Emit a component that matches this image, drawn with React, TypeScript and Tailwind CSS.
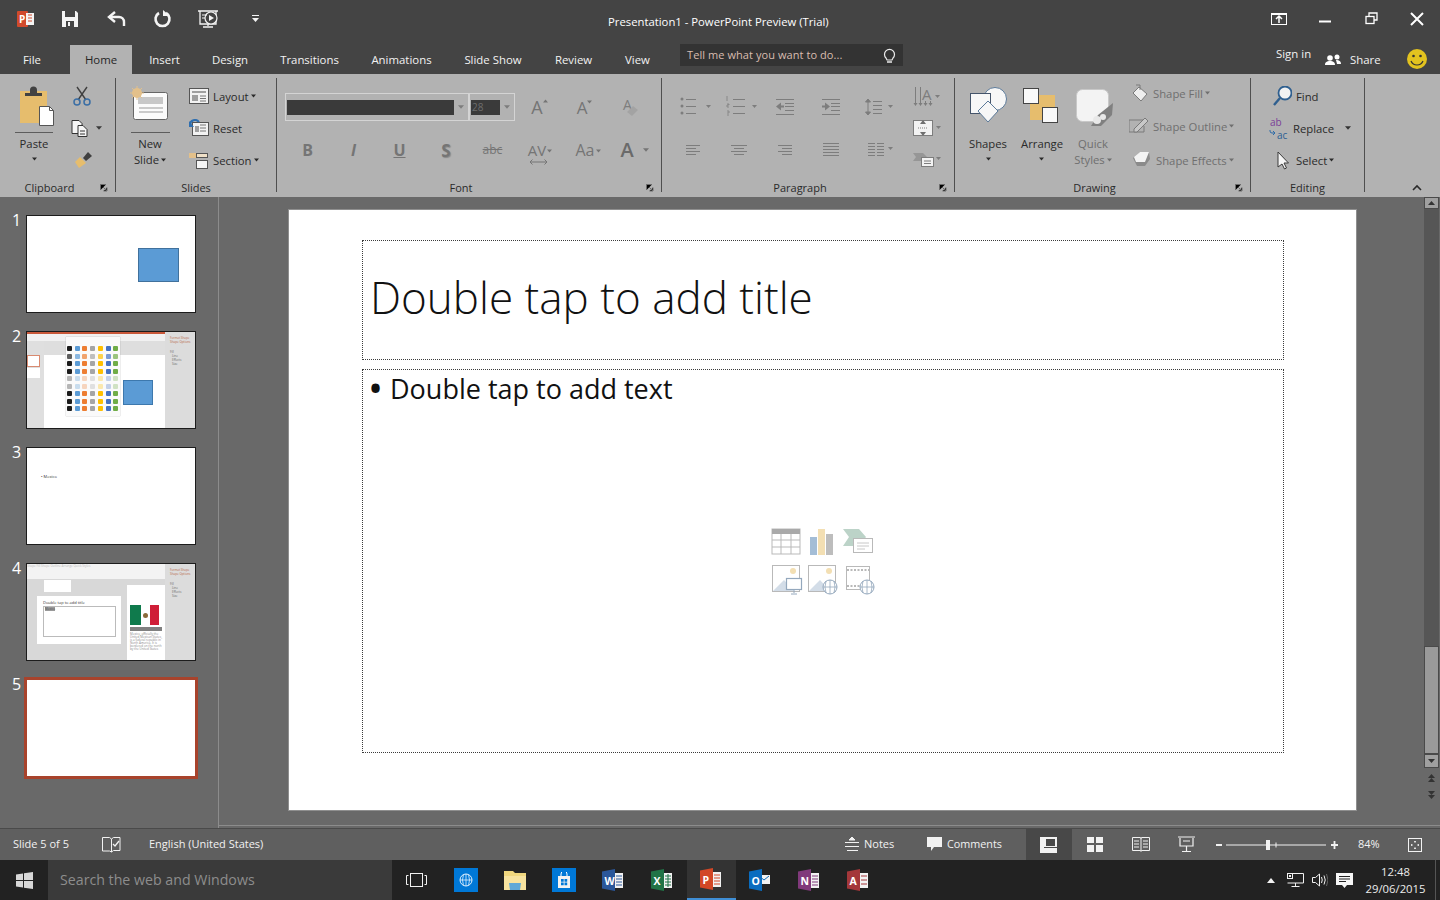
import React from 'react';

// svg whose viewBox is in page coordinates, so shapes can be read straight off the screenshot
function Ic({ x, y, w, h, children, className }: { x: number; y: number; w: number; h: number; children?: React.ReactNode; className?: string }) {
    return (
        <svg viewBox={`${x} ${y} ${w} ${h}`} width={w} height={h} className={`shrink-0 ${className ?? ''}`} fill="none">
            {children}
        </svg>
    );
}

function Caret({ className }: { className?: string }) {
    return (
        <svg width="7" height="4" viewBox="0 0 7 4" className={`inline-block shrink-0 ${className ?? ''}`}>
            <path d="M0 0h7L3.5 4z" fill="currentColor" />
        </svg>
    );
}

const tabs = [
    { label: 'Insert', cls: 'w-[65px]' },
    { label: 'Design', cls: 'w-[66px]' },
    { label: 'Transitions', cls: 'w-[93px]' },
    { label: 'Animations', cls: 'w-[91px]' },
    { label: 'Slide Show', cls: 'w-[92px]' },
    { label: 'Review', cls: 'w-[69px]' },
    { label: 'View', cls: 'w-[59px]' },
];

function TitleBar() {
    return (
        <div className="flex h-[44px] items-center bg-[#444444] text-white">
            <div className="flex items-center pb-[7px] pl-[17px]">
                <Ic x={17} y={9} w={62} h={20}>
                    <rect x="17" y="11" width="11" height="16" rx="1" fill="#d14a2c" />
                    <rect x="26" y="13" width="8" height="12" fill="#f4f4f4" />
                    <text x="19" y="23" fontSize="10" fontWeight="700" fill="#fff" fontFamily="Open Sans">P</text>
                    <path d="M28 15h4M28 18h4M28 21h4" stroke="#d14a2c" />
                    <path d="M62 11h14l2 2v14H62z" fill="#f4f4f4" />
                    <rect x="65" y="11" width="10" height="6" fill="#444" />
                    <rect x="66" y="21" width="8" height="6" fill="#444" />
                    <rect x="68" y="22" width="2" height="4" fill="#f4f4f4" />
                </Ic>
                <Ic x={79} y={9} w={173} h={20}>
                    <path d="M115 12l-6 5 6 5" stroke="#f4f4f4" strokeWidth="2.4" />
                    <path d="M109 17h10a5 5 0 0 1 5 5v4" stroke="#f4f4f4" strokeWidth="2.4" />
                    <path d="M166 13a7 7 0 1 1-7 0" stroke="#f4f4f4" strokeWidth="2.6" />
                    <path d="M163 10v6h7z" fill="#f4f4f4" />
                    <path d="M198 11h20M200 11v13h16V11M208 24v2M203 27h10" stroke="#f4f4f4" strokeWidth="1.3" />
                    <circle cx="211" cy="18" r="6" fill="#444" stroke="#f4f4f4" strokeWidth="1.2" />
                    <path d="M209 15l5 3-5 3z" fill="#f4f4f4" />
                    <path d="M202 15h5M202 18h3" stroke="#f4f4f4" />
                </Ic>
                <Ic x={252} y={14} w={7} h={9}>
                    <path d="M252 15h7v1h-7zM252 18h7l-3.500 4z" fill="#f4f4f4" />
                </Ic>
            </div>
            <div className="ml-[349px] pt-[1px] text-[11.3px]">Presentation1 - PowerPoint Preview (Trial)</div>
            <div className="ml-auto flex pb-[7px]">
                <div className="flex w-[46px] justify-center">
                    <Ic x={1271} y={12} w={17} h={14}>
                        <rect x="1271.500" y="13.500" width="15" height="11" stroke="#fff" />
                        <path d="M1271 13h16v2h-16z" fill="#fff" />
                        <path d="M1279 23v-6M1276 19l3-3 3 3" stroke="#fff" strokeWidth="1.500" />
                    </Ic>
                </div>
                <div className="flex w-[46px] justify-center">
                    <Ic x={1319} y={12} w={12} h={14}>
                        <path d="M1319 21.500h12" stroke="#fff" strokeWidth="2" />
                    </Ic>
                </div>
                <div className="flex w-[46px] justify-center">
                    <Ic x={1364} y={12} w={13} h={13}>
                        <rect x="1365" y="16.500" width="8" height="7" stroke="#fff" strokeWidth="1.300" />
                        <path d="M1368 16v-3h8v7h-3" stroke="#fff" strokeWidth="1.300" />
                    </Ic>
                </div>
                <div className="flex w-[46px] justify-center">
                    <Ic x={1410} y={12} w={14} h={14}>
                        <path d="M1411 13l12 12M1423 13l-12 12" stroke="#fff" strokeWidth="2" />
                    </Ic>
                </div>
            </div>
        </div>
    );
}

function TabRow() {
    return (
        <div className="flex h-[30px] items-center bg-[#444444] text-[11.4px] text-[#f2f2f2]">
            <div className="w-[64px] pt-[1px] text-center">File</div>
            <div className="ml-[6px] flex h-[29px] w-[62px] items-center justify-center self-end bg-[#b2b2b2] text-[#262626]">Home</div>
            {tabs.map((t) => (
                <div key={t.label} className={`${t.cls} pt-[1px] text-center`}>
                    {t.label}
                </div>
            ))}
            <div className="mb-[8px] ml-[13px] flex h-[22px] w-[223px] items-center justify-between bg-[#333333] pl-[7px] pr-[7px] pt-[1px] text-[11px] tracking-[0.07px] text-[#d9bdb0]">
                <span>Tell me what you want to do...</span>
                <Ic x={882} y={47} w={13} h={16}>
                    <path d="M885 57a5 5 0 1 1 7 0l-1 2h-5z" stroke="#ededed" strokeWidth="1.200" />
                    <path d="M886 61h5" stroke="#ededed" strokeWidth="1.500" />
                </Ic>
            </div>
            <div className="mb-[11px] ml-[373px] w-[49px] shrink-0">Sign in</div>
            <Ic x={1325} y={52} w={16} h={14}>
                <circle cx="1330" cy="58" r="2.800" fill="#fff" />
                <circle cx="1337" cy="57" r="2.500" fill="#fff" />
                <path d="M1325 65c0-3 2-4 5-4s5 1 5 4zM1336 60c3 0 5 1 5 4h-4z" fill="#fff" />
            </Ic>
            <div className="ml-[9px] w-[44px] shrink-0 pt-[1px]">Share</div>
            <Ic x={1406} y={48} w={22} h={22} className="ml-[12px]">
                <circle cx="1417" cy="59" r="10" fill="#e3c31f" />
                <circle cx="1413.500" cy="56" r="1.300" fill="#333" />
                <circle cx="1420.500" cy="56" r="1.300" fill="#333" />
                <path d="M1411 61a6.500 6.500 0 0 0 12 0" stroke="#333" strokeWidth="1.200" />
            </Ic>
        </div>
    );
}

function Launcher() {
    return (
        <svg width="8" height="8" viewBox="0 0 8 8" className="absolute bottom-[0px] right-[7px]">
            <path d="M.5 6V.5H6" stroke="#6c6c6c" />
            <path d="M3 3l4 4M7 3.500V7H3.500" stroke="#6c6c6c" />
        </svg>
    );
}

function Group({ label, launcher, className, children }: { label: string; launcher?: boolean; className: string; children: React.ReactNode }) {
    return (
        <section className={`relative my-[4px] flex h-[114px] shrink-0 flex-col border-r border-[#4f4f4f] ${className}`}>
            <div className="flex min-h-0 flex-1 pt-[2px]">{children}</div>
            <div className={`-mb-[3px] h-[14px] text-center text-[11px] leading-[14px] text-[#2a2a2a] ${launcher ? 'pr-[16px]' : ''}`}>{label}</div>
            {launcher && <Launcher />}
        </section>
    );
}

function BigLabel({ lines, caretInline, disabled }: { lines: string[]; caretInline?: boolean; disabled?: boolean }) {
    return (
        <div className={`mt-[3px] text-center text-[11.3px] leading-[16px] ${disabled ? 'text-[#6f6f6f]' : 'text-[#2a2a2a]'}`}>
            {lines.map((l, i) => (
                <div key={l} className="whitespace-nowrap">
                    {l}
                    {caretInline && i === lines.length - 1 && <Caret className="mb-[2px] ml-[2px] w-[5px]" />}
                </div>
            ))}
            {!caretInline && (
                <div className="flex h-[14px] items-center justify-center">
                    <Caret className="w-[5px]" />
                </div>
            )}
        </div>
    );
}

function SmallRow({ icon, text, gap, disabled, caret = true, className }: { icon: React.ReactNode; text: string; gap: string; disabled?: boolean; caret?: boolean; className?: string }) {
    return (
        <div className={`flex h-[32px] items-center whitespace-nowrap text-[11.3px] ${disabled ? 'text-[#6f6f6f]' : 'text-[#2a2a2a]'} ${className ?? ''}`}>
            {icon}
            <span className={`mt-[2px] ${gap}`}>{text}</span>
            {caret && <Caret className="ml-[2px] w-[5px]" />}
        </div>
    );
}

function ClipboardGroup() {
    return (
        <Group label="Clipboard" launcher className="w-[116px]">
            <div className="ml-[12px] w-[44px]">
                <Ic x={12} y={80} w={44} h={53}>
                    <rect x="20" y="91" width="27" height="32" fill="#e6bd6d" />
                    <path d="M25 96h17v-3h-5v-3a3 3 0 0 0-7 0v3h-5z" fill="#424242" />
                    <path d="M39.500 106.500h10l4 4v15h-14z" fill="#fff" stroke="#555" />
                    <path d="M49.500 106.500v4h4" stroke="#555" />
                    <path d="M15 132.500h38" stroke="#5d5d5d" />
                </Ic>
                <BigLabel lines={['Paste']} />
            </div>
            <div className="ml-[12px]">
                <div className="flex h-[32px] items-center">
                    <Ic x={68} y={84} w={30} h={24}>
                        <path d="M77 87l9 13M87 87l-9 13" stroke="#404040" strokeWidth="1.400" />
                        <circle cx="77" cy="102" r="3" stroke="#3a6ea5" strokeWidth="1.500" />
                        <circle cx="87" cy="102" r="3" stroke="#3a6ea5" strokeWidth="1.500" />
                    </Ic>
                </div>
                <div className="flex h-[32px] items-center text-[#3a3a3a]">
                    <Ic x={68} y={116} w={28} h={24}>
                        <path d="M72 120.500h7l3 3v10H72z" fill="#f5f5f5" stroke="#333" />
                        <path d="M78 125.500h5l4 4v7h-9z" fill="#f5f5f5" stroke="#333" />
                        <path d="M80 131h5M80 134h5" stroke="#333" />
                    </Ic>
                    <Caret className="w-[6px]" />
                </div>
                <div className="flex h-[32px] items-center">
                    <Ic x={68} y={148} w={30} h={24}>
                        <path d="M75 162l5-5 6 6-7 5z" fill="#e6bd6d" />
                        <path d="M83 158l5-6 4 4-6 5z" fill="#404040" />
                    </Ic>
                </div>
            </div>
        </Group>
    );
}

function SlidesGroup() {
    return (
        <Group label="Slides" className="w-[161px]">
            <div className="ml-[14px] w-[40px]">
                <Ic x={130} y={80} w={40} h={53}>
                    <rect x="133.500" y="92.500" width="34" height="27" rx="2" fill="#fbfbfb" stroke="#666" />
                    <rect x="138" y="97" width="25" height="7" fill="#c8c8c8" />
                    <path d="M139 108h24M139 112h24" stroke="#999" />
                    <circle cx="137" cy="93" r="5" fill="#e3c08a" />
                    <path d="M137 86v14M130 93h14M132 88l10 10M142 88l-10 10" stroke="#e3c08a" />
                    <path d="M131 132.500h39" stroke="#5d5d5d" />
                </Ic>
                <BigLabel lines={['New', 'Slide']} caretInline />
            </div>
            <div className="ml-[19px]">
                <SmallRow
                    gap="ml-[3px]"
                    text="Layout"
                    icon={
                        <Ic x={189} y={87} w={21} h={18}>
                            <rect x="189.500" y="88.500" width="19" height="15" fill="#f3f3f3" stroke="#555" />
                            <path d="M192 91h14v2h-14zM192 95h6v6h-6z" fill="#a0a0a0" />
                            <path d="M200 96h6M200 98.500h6M200 101h6" stroke="#777" />
                        </Ic>
                    }
                />
                <SmallRow
                    gap="ml-[3px]"
                    text="Reset"
                    caret={false}
                    icon={
                        <Ic x={189} y={119} w={21} h={18}>
                            <rect x="192.500" y="122.500" width="16" height="13" fill="#f3f3f3" stroke="#555" />
                            <path d="M200 125h6M200 128h6M200 131h6" stroke="#777" />
                            <path d="M195 126h4v6h-4z" fill="#a0a0a0" />
                            <path d="M190 125a5 5 0 0 1 9-3" stroke="#2f6fb0" strokeWidth="2" />
                            <path d="M189 121v6h5z" fill="#2f6fb0" />
                        </Ic>
                    }
                />
                <SmallRow
                    gap="ml-[4px]"
                    className="-ml-[1px]"
                    text="Section"
                    icon={
                        <Ic x={188} y={151} w={21} h={19}>
                            <path d="M189 153h7l3 3-3 2h-7z" fill="#e3c08a" />
                            <rect x="196.500" y="153.500" width="11" height="4" fill="#efe0c8" stroke="#555" />
                            <rect x="196.500" y="160.500" width="11" height="8" fill="#f5f5f5" stroke="#555" />
                        </Ic>
                    }
                />
            </div>
        </Group>
    );
}

const G = '#7d7d7d';

function FontGroup() {
    return (
        <Group label="Font" launcher className="w-[385px]">
            <div className="pt-[13px] text-[#757575]">
                <div className="flex h-[28px] items-center">
                    <div className="ml-[8px] flex h-[28px] w-[230px] items-center border border-[#d4d4d4] pl-[1px]">
                        <div className="h-[15px] w-[167px] bg-[#3a3a3a]" />
                        <div className="flex w-[14px] justify-center text-[#7d7d7d]">
                            <Caret className="w-[6px]" />
                        </div>
                        <div className="h-[26px] w-[2px] bg-[#d4d4d4]" />
                        <div className="ml-[1px] h-[15px] w-[29px] bg-[#3a3a3a] pl-[1px] text-[10px] leading-[15px] text-[#6d6d6d]">28</div>
                        <div className="flex w-[14px] justify-center text-[#7d7d7d]">
                            <Caret className="w-[6px]" />
                        </div>
                    </div>
                    <div className="ml-[2px] flex w-[45px] justify-center">
                        <span className="text-[18px] leading-none">A</span>
                        <Caret className="mt-[1px] w-[5px] rotate-180" />
                    </div>
                    <div className="flex w-[45px] justify-center">
                        <span className="text-[17px] leading-none">A</span>
                        <Caret className="mt-[1px] w-[5px]" />
                    </div>
                    <div className="flex w-[45px] justify-center">
                        <Ic x={620} y={96} w={20} h={22}>
                            <text x="623" y="110" fontSize="14" fill={G} fontFamily="Open Sans">A</text>
                            <path d="M633 106l5 4-6 6-5-4z" fill="#a3a3a3" />
                        </Ic>
                    </div>
                </div>
                <div className="mt-[13px] flex h-[32px] items-center pl-[8px] text-[16px] leading-none">
                    <div className="w-[45px] text-center font-bold">B</div>
                    <div className="w-[47px] text-center font-bold italic">I</div>
                    <div className="w-[45px] text-center font-bold underline">U</div>
                    <div className="w-[48px] text-center text-[17px] font-bold [text-shadow:1px_1px_1px_#888]">S</div>
                    <div className="w-[45px] text-center text-[12px] line-through">abc</div>
                    <div className="relative w-[50px] text-center leading-none">
                        <span className="text-[15px]">AV</span>
                        <Caret className="mb-[2px] ml-[1px] w-[5px]" />
                        <svg width="19" height="6" viewBox="0 0 19 6" className="absolute -bottom-[7px] left-[14px]" fill="none" stroke="#757575">
                            <path d="M1 3h17M3.500.5L1 3l2.500 2.500M15.500.5L18 3l-2.500 2.500" />
                        </svg>
                    </div>
                    <div className="w-[46px] text-center">
                        <span className="text-[16px]">Aa</span>
                        <Caret className="mb-[2px] ml-[1px] w-[5px]" />
                    </div>
                    <div className="w-[32px] text-center text-[20px] font-semibold text-[#6a6a6a]">A</div>
                    <Caret className="w-[6px]" />
                </div>
            </div>
        </Group>
    );
}

function Lines({ x, w, ys, strokeColor = G }: { x: number; w: number; ys: number[]; strokeColor?: string }) {
    return <path d={ys.map((y) => `M${x} ${y}.5h${w}`).join('')} stroke={strokeColor} />;
}

function ParagraphGroup() {
    return (
        <Group label="Paragraph" launcher className="w-[293px]">
            <div className="w-[243px] pl-[4px] pt-[6px]">
                <div className="flex">
                    <Ic x={666} y={86} w={46} h={40}>
                        <circle cx="682" cy="99" r="1.500" fill={G} />
                        <circle cx="682" cy="106" r="1.500" fill={G} />
                        <circle cx="682" cy="113" r="1.500" fill={G} />
                        <Lines x={686} w={10} ys={[99, 106, 113]} />
                        <path d="M706 105h5l-2.500 3z" fill={G} />
                    </Ic>
                    <Ic x={712} y={86} w={50} h={40}>
                        <path d="M727 96v5M727 104h2v1h-2v2h2M727 111h2v2h-2M727 115h2" stroke={G} strokeWidth=".8" />
                        <Lines x={733} w={12} ys={[99, 106, 113]} />
                        <path d="M752 105h5l-2.500 3z" fill={G} />
                    </Ic>
                    <Ic x={762} y={86} w={46} h={40}>
                        <Lines x={776} w={18} ys={[99, 114]} />
                        <Lines x={785} w={9} ys={[103, 106, 110]} />
                        <path d="M776 106.500l5-4v3h3v2h-3v3z" fill={G} />
                    </Ic>
                    <Ic x={808} y={86} w={46} h={40}>
                        <Lines x={822} w={18} ys={[99, 114]} />
                        <Lines x={831} w={9} ys={[103, 106, 110]} />
                        <path d="M830 106.500l-5-4v3h-3v2h3v3z" fill={G} />
                    </Ic>
                    <Ic x={854} y={86} w={46} h={40}>
                        <path d="M868 100v14M865.500 102l2.500-3 2.500 3zM865.500 112l2.500 3 2.500-3z" stroke={G} fill={G} />
                        <Lines x={873} w={9} ys={[101, 105, 109, 113]} />
                        <path d="M888 105h5l-2.500 3z" fill={G} />
                    </Ic>
                </div>
                <div className="mt-[4px] flex">
                    <Ic x={666} y={130} w={50} h={40}>
                        <Lines x={686} w={14} ys={[145, 151]} />
                        <Lines x={686} w={10} ys={[148, 154]} />
                    </Ic>
                    <Ic x={716} y={130} w={46} h={40}>
                        <Lines x={731} w={16} ys={[145, 151]} />
                        <Lines x={734} w={10} ys={[148, 154]} />
                    </Ic>
                    <Ic x={762} y={130} w={46} h={40}>
                        <Lines x={778} w={14} ys={[145, 151]} />
                        <Lines x={782} w={10} ys={[148, 154]} />
                    </Ic>
                    <Ic x={808} y={130} w={46} h={40}>
                        <Lines x={823} w={16} ys={[143, 146, 149, 152, 155]} />
                    </Ic>
                    <Ic x={854} y={130} w={46} h={40}>
                        <Lines x={868} w={7} ys={[143, 146, 149, 152, 155]} />
                        <Lines x={877} w={7} ys={[143, 146, 149, 152, 155]} />
                        <path d="M888 147h5l-2.500 3z" fill={G} />
                    </Ic>
                </div>
            </div>
            <div className="ml-[1px] flex flex-col">
                <Ic x={906} y={80} w={40} h={32}>
                    <path d="M915.500 87v17M920.500 87v17M925.500 101v3M930.500 101v3" stroke={G} />
                    <path d="M913.500 103h4l-2 3zM918.500 103h4l-2 3zM923.500 103h4l-2 3zM928.500 103h4l-2 3z" fill={G} />
                    <text x="922" y="100" fontSize="15" fill={G} fontFamily="Open Sans">A</text>
                    <path d="M935 95h5l-2.500 3z" fill={G} />
                </Ic>
                <Ic x={906} y={112} w={40} h={32}>
                    <rect x="913.500" y="120.500" width="19" height="15" fill="#f2f2f2" stroke={G} />
                    <path d="M918 128h10" stroke={G} strokeDasharray="1 1" />
                    <path d="M923 120l-3 4h6zM923 136l-3-4h6z" fill="#6f6f6f" />
                    <path d="M936 126h5l-2.500 3z" fill={G} />
                </Ic>
                <Ic x={906} y={144} w={40} h={32}>
                    <path d="M913 153h10l4 4-4 4h-10l3-4z" fill="#969696" />
                    <rect x="921.500" y="157.500" width="12" height="9" fill="#f2f2f2" stroke={G} />
                    <path d="M924 161h7M924 163.500h7" stroke={G} />
                    <path d="M936 157h5l-2.500 3z" fill={G} />
                </Ic>
            </div>
        </Group>
    );
}

function DrawingGroup() {
    return (
        <Group label="Drawing" launcher className="w-[296px]">
            <div className="ml-[13px] w-[40px]">
                <Ic x={968} y={80} w={40} h={53}>
                    <circle cx="995" cy="99" r="11.500" fill="#f7f7f7" stroke="#5c7a99" />
                    <rect x="970.500" y="93.500" width="20" height="20" fill="#f7f7f7" stroke="#44546a" />
                    <path d="M988 101l10 10-10 11-10-11z" fill="#f7f7f7" stroke="#5c7a99" />
                </Ic>
                <BigLabel lines={['Shapes']} />
            </div>
            <div className="ml-[13px] w-[40px]">
                <Ic x={1021} y={80} w={40} h={53}>
                    <rect x="1030" y="95" width="15" height="25" fill="#e6bd6d" />
                    <rect x="1030" y="95" width="25" height="15" fill="#e6bd6d" />
                    <rect x="1023.500" y="88.500" width="15" height="15" fill="#f9f9f9" stroke="#444" />
                    <rect x="1042.500" y="107.500" width="15" height="15" fill="#f9f9f9" stroke="#444" />
                </Ic>
                <BigLabel lines={['Arrange']} />
            </div>
            <div className="ml-[12px] w-[40px]">
                <Ic x={1073} y={80} w={42} h={53}>
                    <rect x="1076.500" y="89.500" width="32" height="32" rx="6" fill="#f3f3f3" stroke="#c8c8c8" />
                    <path d="M1113 103l-1 12-11 11h-10l7-11z" fill="#808080" />
                    <circle cx="1097" cy="120" r="4" fill="#e8e8e8" />
                    <circle cx="1103" cy="117" r="3" fill="#e8e8e8" />
                </Ic>
                <BigLabel lines={['Quick', 'Styles']} caretInline disabled />
            </div>
            <div className="ml-[16px]">
                <SmallRow
                    disabled
                    gap="ml-[4px]"
                    className="-mt-[3px]"
                    text="Shape Fill"
                    icon={
                        <Ic x={1129} y={84} w={20} h={18}>
                            <path d="M1133 93l6-6 8 7-6 7z" fill="#efefef" stroke="#7a7a7a" />
                            <path d="M1136 85h4v5" stroke="#7a7a7a" />
                        </Ic>
                    }
                />
                <SmallRow
                    disabled
                    gap="ml-[4px]"
                    className="mt-[1px]"
                    text="Shape Outline"
                    icon={
                        <Ic x={1129} y={117} w={20} h={18}>
                            <path d="M1144 120h-15v12h15v-6" stroke="#7a7a7a" />
                            <path d="M1134 129l11-11 3 3-11 11h-3z" fill="#c8c8c8" stroke="#7a7a7a" />
                        </Ic>
                    }
                />
                <SmallRow
                    disabled
                    gap="ml-[5px]"
                    className="ml-[3px] mt-[2px]"
                    text="Shape Effects"
                    icon={
                        <Ic x={1132} y={151} w={19} h={18}>
                            <path d="M1133 158l7-6h9l1 7-5 7h-8z" fill="#8b8b8b" />
                            <path d="M1134 157l6-5h9l-2 5-2 5h-9z" fill="#f3f3f3" />
                        </Ic>
                    }
                />
            </div>
        </Group>
    );
}

function EditingGroup() {
    return (
        <Group label="Editing" className="w-[114px]">
            <div className="ml-[18px]">
                <SmallRow
                    gap="ml-[4px]"
                    className="ml-[3px]"
                    caret={false}
                    text="Find"
                    icon={
                        <Ic x={1272} y={86} w={20} h={20}>
                            <circle cx="1285" cy="93" r="6.500" fill="#f2f2f2" stroke="#2f5f8f" strokeWidth="1.800" />
                            <path d="M1280 98l-6 7" stroke="#2f5f8f" strokeWidth="2.400" />
                        </Ic>
                    }
                />
                <SmallRow
                    gap="ml-[2px]"
                    className="-ml-[1px]"
                    text="Replace"
                    caret={false}
                    icon={
                        <Ic x={1268} y={116} w={23} h={24}>
                            <text x="1270" y="126" fontSize="10" fill="#7b3f98" fontFamily="Open Sans">ab</text>
                            <text x="1277" y="138.500" fontSize="10" fill="#2d5f92" fontFamily="Open Sans">ac</text>
                            <path d="M1270 130v1a2 2 0 0 0 2 2h3M1273 131l2 2-2 2" stroke="#2d6ba8" />
                        </Ic>
                    }
                />
                <SmallRow
                    gap="ml-[7px]"
                    className="ml-[8px]"
                    text="Select"
                    icon={
                        <Ic x={1277} y={151} w={12} h={19}>
                            <path d="M1278 152v15l4-3 2.500 5 2-1-2.500-5h4.500z" fill="#f5f5f5" stroke="#3a3a3a" />
                        </Ic>
                    }
                />
            </div>
            <Caret className="absolute left-[94px] top-[48px] w-[6px] text-[#333]" />
        </Group>
    );
}

function Ribbon() {
    return (
        <div className="relative flex h-[123px] shrink-0 bg-[#b2b2b2]">
            <ClipboardGroup />
            <SlidesGroup />
            <FontGroup />
            <ParagraphGroup />
            <DrawingGroup />
            <EditingGroup />
            <svg width="12" height="8" viewBox="0 0 12 8" className="absolute bottom-[5px] right-[17px]">
                <path d="M2 6l4-4 4 4" stroke="#2a2a2a" strokeWidth="1.600" fill="none" />
            </svg>
        </div>
    );
}

function SlideNum({ n }: { n: number }) {
    return <div className="-mt-[3px] w-[26px] pl-[12px] text-[16px] leading-[16px] text-white">{n}</div>;
}

const swatches = ['#1c1c1c', '#5b9bd5', '#ed7d31', '#a5a5a5', '#ffc000', '#4472c4', '#70ad47'];

function ThumbPane() {
    return (
        <div className="absolute right-0 top-0 h-full w-[30px] bg-[#dcdcdc] pl-[5px] pt-[4px] text-[3px] leading-[4px] text-[#b8674a]">
            <div>Format Shape</div>
            <div>Shape Options</div>
            <div className="mt-[6px] text-[#666]">Fill</div>
            <div className="pl-[2px] text-[#666]">Line</div>
            <div className="pl-[2px] text-[#666]">Effects</div>
            <div className="pl-[2px] text-[#666]">Size</div>
        </div>
    );
}

function Thumb2() {
    const rows = [0, 1, 2, 3, 4, 5, 6, 7, 8];
    return (
        <div className="relative h-full w-full overflow-hidden bg-white">
            <div className="h-[2px] bg-[#c9583a]" />
            <div className="h-[7px] bg-[#f1f1f1]" />
            <div className="h-[14px] bg-[#dedede]" />
            <div className="absolute bottom-0 left-0 top-[9px] w-[17px] bg-[#dfdfdf]">
                <div className="mt-[14px] h-[12px] w-[13px] border border-[#d98a70] bg-white" />
                <div className="mt-[1px] h-[10px] w-[13px] bg-white" />
            </div>
            <ThumbPane />
            <div className="absolute left-[96px] top-[48px] h-[25px] w-[30px] border border-[#3d78ad] bg-[#5b9bd5]" />
            <div className="absolute left-[39px] top-[5px] w-[54px] bg-[#fafafa] px-[1px] pb-[5px] pt-[9px] shadow-[0_0_1px_#999]">
                <div className="grid grid-cols-7 gap-x-[2px] gap-y-[2.500px]">
                    {rows.map((r) =>
                        swatches.map((c) => (
                            <div key={`${r}-${c}`} className={`h-[5px] w-[5px] rounded-[1px] ${r === 4 || r === 5 ? 'opacity-30' : r === 1 ? 'opacity-70' : ''}`} style={{ backgroundColor: c }} />
                        )),
                    )}
                </div>
            </div>
        </div>
    );
}

function Thumb4() {
    return (
        <div className="relative h-full w-full overflow-hidden bg-[#d8d8d8]">
            <div className="h-[15px] bg-[#f3f3f3] text-[3px] text-[#bbb]">Shape Fill Shape Outline Arrange Quick Styles</div>
            <div className="absolute left-[10px] top-[32px] h-[48px] w-[84px] bg-white pl-[6px] pt-[4px] text-[4px] leading-[5px] text-[#333]">
                Double tap to add title
                <div className="mt-[1px] h-[31px] w-[73px] border border-[#bbbbbb] pl-[1px] text-[3px] leading-[4px]">
                    <span className="bg-[#999] text-[#555]">Mexico</span>
                </div>
            </div>
            <div className="absolute left-[17px] top-[16px] h-[12px] w-[27px] bg-white" />
            <div className="absolute left-[100px] top-[21px] h-[75px] w-[38px] bg-white px-[3px] pt-[20px]">
                <div className="flex h-[20px] w-[29px]">
                    <div className="w-[11px] bg-[#0f7a4c]" />
                    <div className="flex w-[9px] items-center justify-center bg-white">
                        <div className="h-[5px] w-[5px] rounded-full bg-[#8a6a3a]" />
                    </div>
                    <div className="w-[9px] bg-[#cf1e37]" />
                </div>
                <div className="mt-[2px] h-[4px] bg-[#808080]" />
                <div className="mt-[2px] text-[3px] leading-[3px] text-[#888]">Mexico, officially the United Mexican States, is a federal republic in North America. It is bordered on the north by the United States</div>
            </div>
            <ThumbPane />
        </div>
    );
}

function SlidePane() {
    return (
        <aside className="flex w-[219px] shrink-0 flex-col gap-[18px] border-r border-[#8c8c8c] pt-[18px]">
            <div className="flex">
                <SlideNum n={1} />
                <div className="flex h-[98px] w-[170px] items-start border border-[#1c1c1c] bg-white pl-[111px] pt-[32px]">
                    <div className="h-[34px] w-[41px] border border-[#41719c] bg-[#5b9bd5]" />
                </div>
            </div>
            <div className="flex">
                <SlideNum n={2} />
                <div className="h-[98px] w-[170px] border border-[#1c1c1c]">
                    <Thumb2 />
                </div>
            </div>
            <div className="flex">
                <SlideNum n={3} />
                <div className="h-[98px] w-[170px] border border-[#1c1c1c] bg-white pl-[14px] pt-[26px] text-[4px] leading-[6px] text-[#333]">• Mexico</div>
            </div>
            <div className="flex">
                <SlideNum n={4} />
                <div className="h-[98px] w-[170px] border border-[#1c1c1c]">
                    <Thumb4 />
                </div>
            </div>
            <div className="-mt-[2px] flex">
                <div className="pt-[2px]">
                    <SlideNum n={5} />
                </div>
                <div className="-ml-[2px] h-[102px] w-[174px] border-[3px] border-[#a8432c] bg-white" />
            </div>
        </aside>
    );
}

function PlaceholderIcons() {
    const s = '#b9b9b9';
    return (
        <Ic x={770} y={526} w={106} h={70}>
            <rect x="772" y="529" width="28" height="25" fill="#fff" stroke={s} />
            <rect x="772" y="529" width="28" height="5" fill="#a9a9a9" />
            <path d="M772 540h28M772 547h28M781 534v20M791 534v20" stroke={s} />
            <rect x="810" y="537" width="7" height="18" fill="#a4bdd6" />
            <rect x="818" y="529" width="7" height="26" fill="#f3dfb3" />
            <rect x="826" y="534" width="7" height="21" fill="#bdbdbd" />
            <path d="M843 529h16l7 8-7 9h-16l6-9z" fill="#bcd3c8" />
            <rect x="853.500" y="538.500" width="19" height="14" fill="#fff" stroke={s} />
            <path d="M857 543h12M857 546h12M857 549h8" stroke="#c8c8c8" />
            <rect x="772.500" y="565.500" width="27" height="26" fill="#fff" stroke={s} />
            <path d="M773 591l11-11 10 11z" fill="#d3dde8" />
            <circle cx="793" cy="571" r="3" fill="#f3dfb3" />
            <rect x="786.500" y="578.500" width="15" height="11" fill="#fff" stroke="#94a8bd" strokeWidth="1.200" />
            <path d="M794 590v3M791 594h6" stroke="#94a8bd" />
            <rect x="808.500" y="565.500" width="27" height="26" fill="#fff" stroke={s} />
            <path d="M809 591l11-11 10 11z" fill="#d3dde8" />
            <circle cx="829" cy="571" r="3" fill="#f3dfb3" />
            <circle cx="830" cy="587" r="7" fill="#fff" stroke="#94a8bd" />
            <path d="M823 587h14M830 580v14M826 581q-2 6 0 12M834 581q2 6 0 12" stroke="#94a8bd" strokeWidth=".8" />
            <rect x="846.500" y="566.500" width="23" height="23" fill="#fff" stroke={s} />
            <path d="M847 570h22M847 586h22" stroke={s} strokeWidth="2" strokeDasharray="2 1.500" />
            <circle cx="867" cy="587" r="7" fill="#fff" stroke="#94a8bd" />
            <path d="M860 587h14M867 580v14M863 581q-2 6 0 12M871 581q2 6 0 12" stroke="#94a8bd" strokeWidth=".8" />
        </Ic>
    );
}

function SlideCanvas() {
    return (
        <div className="relative flex flex-1 items-start pl-[69px] pt-[12px]">
            <div className="h-[602px] w-[1069px] border border-[#8f8f8f] bg-white pl-[73px] pr-[72px] pt-[30px]">
                <div className="flex h-[120px] items-center border border-dotted border-[#3c3c3c] pb-[6px] pl-[7px] text-[44px] font-light leading-none text-[#111]">
                    Double tap to add title
                </div>
                <div className="relative mt-[9px] flex h-[384px] items-center justify-center border border-dotted border-[#3c3c3c]">
                    <div className="absolute left-[5px] top-0 flex text-[27px] leading-[38px] text-[#111]">
                        <span className="w-[22px] text-[40px] leading-[36px]">•</span>
                        <span>Double tap to add text</span>
                    </div>
                    <PlaceholderIcons />
                </div>
            </div>
            <Scrollbar />
        </div>
    );
}

function Scrollbar() {
    return (
        <div className="absolute bottom-0 right-[1px] top-0 flex w-[15px] flex-col text-[#333]">
            <div className="flex h-[12px] items-center justify-center border border-[#4a4a4a] bg-[#a0a0a0]">
                <Caret className="w-[7px] rotate-180" />
            </div>
            <div className="h-[437px] bg-[#565656]" />
            <div className="h-[108px] border border-[#4a4a4a] bg-[#9a9a9a]" />
            <div className="flex h-[14px] items-center justify-center border border-[#4a4a4a] bg-[#a0a0a0]">
                <Caret className="w-[7px]" />
            </div>
            <div className="mt-[5px] flex h-[10px] flex-col items-center justify-center">
                <Caret className="w-[7px] rotate-180" />
                <Caret className="w-[7px] rotate-180" />
            </div>
            <div className="mt-[7px] flex h-[10px] flex-col items-center justify-center">
                <Caret className="w-[7px]" />
                <Caret className="w-[7px]" />
            </div>
        </div>
    );
}

function StatusBar() {
    return (
        <div className="flex h-[32px] shrink-0 items-center border-t border-[#4a4a4a] bg-[#5f5f5f] text-[11px] text-[#f2f2f2]">
            <div className="ml-[13px] w-[89px]">Slide 5 of 5</div>
            <Ic x={102} y={835} w={19} h={18}>
                <path d="M102.500 836.500h7l2 1.500v13l-2-1h-7zM111.500 838l2-1.500h6.500v13h-6.500l-2 1.500" stroke="#f2f2f2" />
                <path d="M113 843l2 2 4-5" stroke="#f2f2f2" strokeWidth="1.300" />
            </Ic>
            <div className="ml-[28px] w-[696px]">English (United States)</div>
            <Ic x={845} y={836} w={14} h={15}>
                <path d="M852 836l3 3h-6zM845 841.500h14M845 845.500h14M847 849.500h11" stroke="#f2f2f2" fill="#f2f2f2" />
            </Ic>
            <div className="ml-[5px] w-[63px]">Notes</div>
            <Ic x={927} y={836} w={16} h={16}>
                <path d="M927 836h15v10h-8l-3 4v-4h-4z" fill="#f2f2f2" />
            </Ic>
            <div className="ml-[4px] w-[79px] text-[10.800px]">Comments</div>
            <div className="flex h-full w-[46px] items-center justify-center bg-[#484848]">
                <Ic x={1040} y={836} w={18} h={17}>
                    <rect x="1040" y="837" width="17" height="16" fill="#f2f2f2" />
                    <rect x="1046" y="839" width="9" height="7" fill="#484848" />
                    <path d="M1044 847.500h13" stroke="#484848" />
                </Ic>
            </div>
            <div className="flex w-[46px] justify-center">
                <Ic x={1086} y={836} w={17} h={17}>
                    <path d="M1086 837h7v6h-7zM1095 837h7v6h-7zM1086 845h7v7h-7zM1095 845h7v7h-7z" fill="#f2f2f2" />
                </Ic>
            </div>
            <div className="flex w-[46px] justify-center">
                <Ic x={1132} y={836} w={18} h={17}>
                    <path d="M1132.500 837.500h8l.5 1 .5-1h8v13h-8l-.5 1-.5-1h-8zM1141 838v13M1134 841h5M1134 844h5M1134 847h5M1143 841h5M1143 844h5M1143 847h5" stroke="#f2f2f2" />
                </Ic>
            </div>
            <div className="flex w-[46px] justify-center">
                <Ic x={1178} y={836} w={18} h={17}>
                    <path d="M1178 837h17M1180 838v8h13v-8M1186.500 846v5M1182 851.500h9M1183 841h7" stroke="#f2f2f2" strokeWidth="1.200" />
                </Ic>
            </div>
            <Ic x={1214} y={838} w={123} h={12} className="ml-[5px]">
                <path d="M1225 844h100" stroke="#f2f2f2" />
                <path d="M1215 844h6M1330 844h7M1333.500 840v8" stroke="#f2f2f2" strokeWidth="1.800" />
                <rect x="1265" y="839" width="4" height="10" fill="#f2f2f2" />
                <path d="M1275 841.500v5" stroke="#f2f2f2" />
            </Ic>
            <div className="ml-[20px] w-[50px]">84%</div>
            <Ic x={1408} y={836} w={14} h={15}>
                <rect x="1408.500" y="837.500" width="13" height="13" stroke="#f2f2f2" />
                <path d="M1415 840v2M1415 846v2M1411 844h2M1417 844h2M1415 840l-1 1M1415 840l1 1M1415 848l-1-1M1415 848l1-1M1411 844l1-1M1411 844l1 1M1419 844l-1-1M1419 844l-1 1" stroke="#f2f2f2" strokeWidth=".8" />
            </Ic>
        </div>
    );
}

function OfficeIcon({ color, letter, lines }: { color: string; letter: string; lines: string }) {
    return (
        <svg width="24" height="24" viewBox="0 0 24 24">
            <rect x="10" y="5" width="12" height="15" fill="#f2f2f2" />
            <path d={lines} stroke={color} />
            <path d="M1 3.500l13-2.500v22l-13-2.500z" fill={color} />
            <text x="3.500" y="16.500" fontSize="10.500" fontWeight="700" fill="#fff" fontFamily="Open Sans">
                {letter}
            </text>
        </svg>
    );
}

const apps = [
    { letter: 'W', color: '#2b579a', lines: 'M15 8h6M15 11h6M15 14h6M15 17h6' },
    { letter: 'X', color: '#217346', lines: 'M15 8h6M15 11h6M15 14h6M15 17h6M18 6v13' },
];

function Taskbar() {
    return (
        <div className="flex h-[40px] shrink-0 items-center bg-[#222222] text-white">
            <div className="flex w-[48px] justify-center">
                <svg width="17" height="17" viewBox="0 0 17 17">
                    <path d="M0 2.500l7-1v6.500H0zM8 1.300L17 0v8H8zM0 9h7v6.500l-7-1zM8 9h9v8l-9-1.300z" fill="#d8d8d8" />
                </svg>
            </div>
            <div className="flex h-full w-[344px] items-center bg-[#3a3a3a] pl-[12px] text-[14.200px] text-[#8d8d8d]">Search the web and Windows</div>
            <div className="flex w-[49px] justify-center">
                <svg width="21" height="14" viewBox="0 0 21 14" fill="none" stroke="#f2f2f2">
                    <rect x="4.500" y=".5" width="12" height="13" strokeWidth="1" />
                    <path d="M2.500 2.500H.5v9h2M18.500 2.500h2v9h-2" />
                </svg>
            </div>
            <div className="w-[0.5px]" />
            <div className="flex w-[49px] justify-center">
                <div className="flex h-[24px] w-[24px] items-center justify-center bg-[#0078d7]">
                    <svg width="14" height="14" viewBox="0 0 14 14" fill="none" stroke="#dff0ff">
                        <circle cx="7" cy="7" r="6" />
                        <path d="M1 7h12M7 1v12M4.500 1.500q-2 5.500 0 11M9.500 1.500q2 5.500 0 11" strokeWidth=".8" />
                    </svg>
                </div>
            </div>
            <div className="flex w-[49px] justify-center">
                <svg width="24" height="22" viewBox="0 0 24 22">
                    <path d="M1 2h9l2 2h11v17H1z" fill="#f0d77e" />
                    <path d="M1 7h22v14H1z" fill="#f7e39f" />
                    <path d="M6 14h12l-1 7H7z" fill="#5fa8d8" />
                </svg>
            </div>
            <div className="flex w-[49px] justify-center">
                <div className="relative flex h-[24px] w-[24px] items-center justify-center bg-[#0078d7]">
                    <svg width="14" height="16" viewBox="0 0 14 16">
                        <path d="M4 4V2a3 3 0 0 1 6 0v2" stroke="#fff" fill="none" />
                        <path d="M1 4h12v12H1z" fill="#f2f2f2" />
                        <path d="M4 7h2.700v2.700H4zM7.500 7h2.700v2.700H7.500zM4 10.500h2.700v2.700H4zM7.500 10.500h2.700v2.700H7.500z" fill="#0078d7" />
                    </svg>
                </div>
            </div>
            {apps.map((a) => (
                <div key={a.letter} className="flex w-[49px] justify-center">
                    <OfficeIcon {...a} />
                </div>
            ))}
            <div className="flex h-full w-[49px] flex-col items-center justify-center border-b-[2px] border-[#3f8fd6] bg-[#333333]">
                <OfficeIcon color="#d24726" letter="P" lines="M15 8h6M15 11h6M15 14h6M15 17h6" />
            </div>
            <div className="flex w-[49px] justify-center">
                <svg width="24" height="24" viewBox="0 0 24 24">
                    <rect x="10" y="7" width="12" height="9" fill="#f2f2f2" />
                    <path d="M11 8l5 4 5-4" stroke="#0a6cbf" fill="none" />
                    <path d="M1 3.500l13-2.500v22l-13-2.500z" fill="#0a6cbf" />
                    <text x="3.500" y="16.500" fontSize="10.500" fontWeight="700" fill="#fff" fontFamily="Open Sans">O</text>
                </svg>
            </div>
            <div className="flex w-[49px] justify-center">
                <OfficeIcon color="#80397b" letter="N" lines="M15 8h6M15 11h6M15 14h6M15 17h6" />
            </div>
            <div className="flex w-[49px] justify-center">
                <OfficeIcon color="#a4373a" letter="A" lines="M15 8h6M15 12h6M15 16h6" />
            </div>
            <div className="ml-[384px] flex items-center">
                <svg width="8" height="5" viewBox="0 0 8 5">
                    <path d="M0 5l4-5 4 5z" fill="#f2f2f2" />
                </svg>
                <svg width="17" height="16" viewBox="0 0 17 16" fill="none" stroke="#f2f2f2" className="ml-[12px]">
                    <path d="M.5 1.500h16v9.500h-16M8.500 11v3M4.500 14.500h8" />
                    <rect x=".5" y="1.500" width="5" height="5" fill="#222" />
                    <rect x="2" y="3" width="2" height="2" fill="#f2f2f2" stroke="none" />
                </svg>
                <svg width="16" height="14" viewBox="0 0 16 14" fill="none" stroke="#f2f2f2" className="ml-[8px]">
                    <path d="M.5 4.500h3l4-3.500v12l-4-3.500h-3z" />
                    <path d="M9.500 4q1.500 3 0 6M12 2.500q2.500 4.500 0 9" />
                    <path d="M14.500 1q3 6 0 12" stroke="#666" />
                </svg>
                <svg width="17" height="17" viewBox="0 0 17 17" className="ml-[8px]">
                    <path d="M0 1h17v12h-6l-2.500 3L6 13H0z" fill="#f6f6f6" />
                    <path d="M3 4.500h11M3 7h11M3 9.500h7" stroke="#222" />
                </svg>
                <div className="ml-[12px] w-[62px] text-center text-[11.3px] leading-[17px] text-[#ececec]">
                    <div>12:48</div>
                    <div className="whitespace-nowrap">29/06/2015</div>
                </div>
                <div className="ml-[8px] h-[40px] w-px bg-[#555]" />
            </div>
        </div>
    );
}

export default function App() {
    return (
        <div className="flex h-[900px] w-[1440px] flex-col overflow-hidden font-['Open_Sans',sans-serif]">
            <TitleBar />
            <TabRow />
            <Ribbon />
            <div className="flex min-h-0 flex-1 bg-[#696969]">
                <SlidePane />
                <main className="flex flex-1 flex-col">
                    <SlideCanvas />
                    <div className="h-[3px] border-t border-[#8c8c8c]" />
                </main>
            </div>
            <StatusBar />
            <Taskbar />
        </div>
    );
}
